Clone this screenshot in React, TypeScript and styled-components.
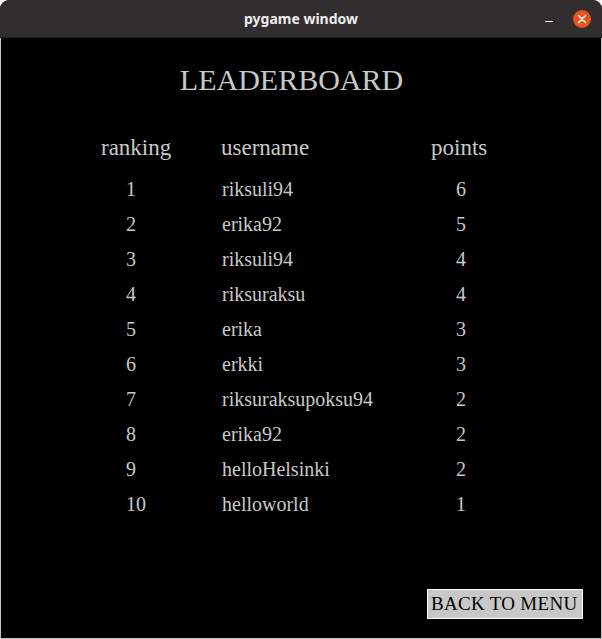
import React from "react";
import styled, { createGlobalStyle } from "styled-components";

const Global = createGlobalStyle`
  html, body { margin: 0; padding: 0; background: #ffffff; }
  body { width: 602px; height: 639px; overflow: hidden; }
`;

const Window = styled.div`
  width: 602px;
  height: 639px;
  display: flex;
  flex-direction: column;
  box-sizing: border-box;
  background: #2f2d2d;
  border-radius: 9px 9px 0 0;
  overflow: hidden;
`;

const TitleBar = styled.div`
  height: 37px;
  flex: 0 0 37px;
  display: flex;
  align-items: center;
  justify-content: center;
  position: relative;
  background: #302e2e;
  border-bottom: 1px solid #1e1c1c;
`;

const TitleText = styled.span`
  font-family: "Noto Sans", "Open Sans", sans-serif;
  font-weight: 700;
  font-size: 14px;
  color: #ededed;
`;

const Controls = styled.div`
  position: absolute;
  right: 11px;
  top: 10px;
  display: flex;
  align-items: center;
  gap: 20px;
`;

const Minimize = styled.span`
  display: block;
  width: 8px;
  height: 1px;
  margin-top: 4px;
  background: #f2f2f2;
`;

const Close = styled.span`
  width: 18px;
  height: 18px;
  border-radius: 50%;
  background: #e95420;
  display: flex;
  align-items: center;
  justify-content: center;
`;

const Frame = styled.div`
  flex: 1;
  display: flex;
  flex-direction: column;
  background: #000;
  border: 1px solid #c4c4c4;
  border-top: none;
`;

const Content = styled.div`
  flex: 1;
  display: flex;
  flex-direction: column;
  padding-top: 22px;
  color: #c8c8c8;
  font-family: "Liberation Serif", "Times New Roman", serif;
`;

const Heading = styled.h1`
  margin: 0;
  height: 40px;
  line-height: 40px;
  font-size: 30px;
  font-weight: 400;
  text-align: center;
  padding-right: 19px;
`;

const Table = styled.div`
  margin-top: 33px;
  padding-left: 100px;
  display: grid;
  grid-template-columns: 120px 210px 1fr;
`;

const HeadCell = styled.div`
  font-size: 23px;
  line-height: 30px;
  height: 30px;
  margin-bottom: 9px;
`;

const Cell = styled.div<{ $indent: number }>`
  font-size: 20px;
  line-height: 35px;
  height: 35px;
  padding-left: ${(p) => p.$indent}px;
`;

const Footer = styled.div`
  margin-top: auto;
  display: flex;
  justify-content: flex-end;
  padding: 0 18px 19px 0;
`;

const MenuButton = styled.button`
  width: 156px;
  height: 30px;
  box-sizing: border-box;
  border: 1px solid #ffffff;
  background: #c8c8c8;
  color: #000;
  font-family: "Liberation Serif", "Times New Roman", serif;
  font-size: 19px;
  line-height: 28px;
  letter-spacing: 0.3px;
  text-align: left;
  padding: 0 0 0 3px;
  margin: 0;
  cursor: pointer;
  white-space: nowrap;
`;

const rows: [number, string, number][] = [
  [1, "riksuli94", 6],
  [2, "erika92", 5],
  [3, "riksuli94", 4],
  [4, "riksuraksu", 4],
  [5, "erika", 3],
  [6, "erkki", 3],
  [7, "riksuraksupoksu94", 2],
  [8, "erika92", 2],
  [9, "helloHelsinki", 2],
  [10, "helloworld", 1],
];

export default function App() {
  return (
    <>
      <Global />
      <Window>
        <TitleBar>
          <TitleText>pygame window</TitleText>
          <Controls>
            <Minimize />
            <Close>
              <svg width="10" height="10" viewBox="0 0 10 10">
                <path d="M1.5 1.5 L8.5 8.5 M8.5 1.5 L1.5 8.5" stroke="#fff" strokeWidth="1.5" strokeLinecap="round" />
              </svg>
            </Close>
          </Controls>
        </TitleBar>
        <Frame>
          <Content>
            <Heading>LEADERBOARD</Heading>
            <Table>
              <HeadCell>ranking</HeadCell>
              <HeadCell>username</HeadCell>
              <HeadCell>points</HeadCell>
              {rows.map(([rank, name, pts], i) => (
                <React.Fragment key={i}>
                  <Cell $indent={25}>{rank}</Cell>
                  <Cell $indent={1}>{name}</Cell>
                  <Cell $indent={25}>{pts}</Cell>
                </React.Fragment>
              ))}
            </Table>
            <Footer>
              <MenuButton>BACK TO MENU</MenuButton>
            </Footer>
          </Content>
        </Frame>
      </Window>
    </>
  );
}
